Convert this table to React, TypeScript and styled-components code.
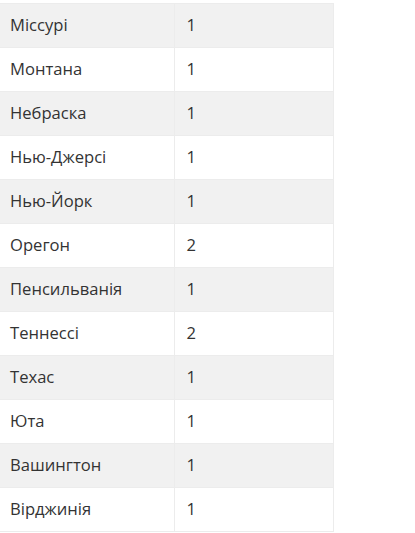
import React from "react";
import styled, { createGlobalStyle } from "styled-components";

const Global = createGlobalStyle`
  html, body { margin: 0; padding: 0; background: #fff; }
  body { font-family: "Open Sans", "Liberation Sans", sans-serif; }
`;

const Page = styled.div`
  padding-top: 3px;
  margin-left: -2px;
`;

const Table = styled.table`
  width: 336px;
  border-collapse: collapse;
  font-size: 16.6px;
  color: #333;
`;

const Row = styled.tr<{ $alt: boolean }>`
  background: ${(p) => (p.$alt ? "#f1f1f1" : "#fff")};
`;

const Cell = styled.td<{ $first?: boolean }>`
  height: 44px;
  padding: 0 12px 3px;
  box-sizing: border-box;
  border-top: 1px solid #ececec;
  border-bottom: 1px solid #ececec;
  border-right: 1px solid #ececec;
  width: ${(p) => (p.$first ? "176px" : "auto")};
  vertical-align: middle;
`;

const rows: [string, string][] = [
  ["Міссурі", "1"],
  ["Монтана", "1"],
  ["Небраска", "1"],
  ["Нью-Джерсі", "1"],
  ["Нью-Йорк", "1"],
  ["Орегон", "2"],
  ["Пенсильванія", "1"],
  ["Теннессі", "2"],
  ["Техас", "1"],
  ["Юта", "1"],
  ["Вашингтон", "1"],
  ["Вірджинія", "1"],
];

export default function App() {
  return (
    <>
      <Global />
      <Page>
        <Table>
          <tbody>
            {rows.map(([s, n], i) => (
              <Row key={s} $alt={i % 2 === 0}>
                <Cell $first>{s}</Cell>
                <Cell>{n}</Cell>
              </Row>
            ))}
          </tbody>
        </Table>
      </Page>
    </>
  );
}
